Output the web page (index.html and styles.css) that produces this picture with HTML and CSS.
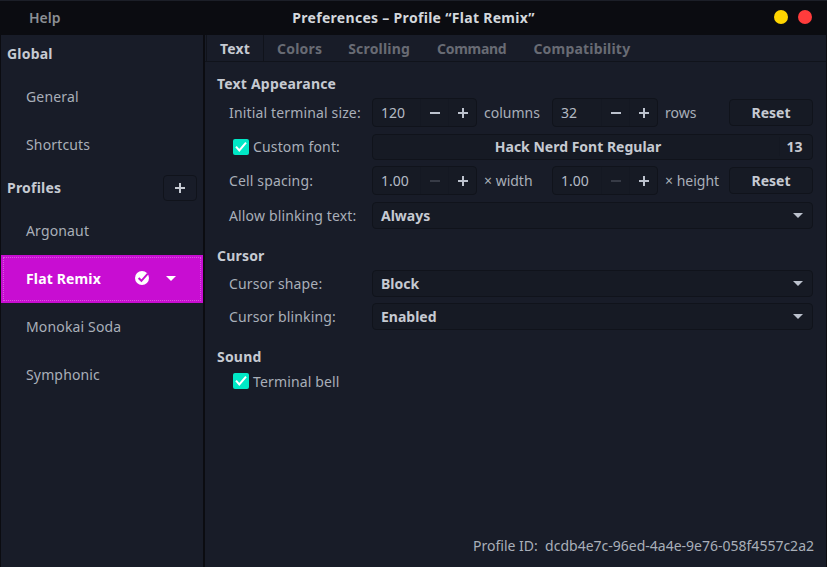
FILE: index.html
```html
<!DOCTYPE html>
<html lang="en">
<head>
    <meta charset="UTF-8">
    <title>Preferences – Profile “Flat Remix”</title>
    <link rel="stylesheet" href="styles.css">
</head>
<body>

<div class="window">
    <header class="titlebar">
        <span class="menu">Help</span>
        <span class="title">Preferences – Profile “Flat Remix”</span>
        <span class="dots">
            <i class="dot dot-min"></i>
            <i class="dot dot-close"></i>
        </span>
    </header>

    <div class="content">
        <aside class="sidebar">
            <div class="side-head">Global</div>
            <div class="side-item">General</div>
            <div class="side-item">Shortcuts</div>
            <div class="side-head side-head-btn">
                Profiles
                <span class="add-btn"><svg class="ico" viewBox="0 0 12 12"><path d="M5 1h2v4h4v2H7v4H5V7H1V5h4z"/></svg></span>
            </div>
            <div class="side-item profile-item">Argonaut</div>
            <div class="side-item profile-item active">
                <span class="active-name">Flat Remix</span>
                <svg class="badge" viewBox="0 0 14 14"><circle cx="7" cy="7" r="7"/><path class="badge-tick" d="M3.6 7l2.8 2.8 6.4-7.2"/></svg>
                <i class="arrow arrow-white"></i>
            </div>
            <div class="side-item profile-item">Monokai Soda</div>
            <div class="side-item profile-item">Symphonic</div>
        </aside>

        <main class="main">
            <nav class="tabs">
                <span class="tab current">Text</span>
                <span class="tab">Colors</span>
                <span class="tab">Scrolling</span>
                <span class="tab tab-tight">Command</span>
                <span class="tab">Compatibility</span>
            </nav>

            <section class="panel">
                <h2 class="heading">Text Appearance</h2>

                <div class="row row-size">
                    <label class="lbl">Initial terminal size:</label>
                    <div class="spin">
                        <span class="spin-val">120</span>
                        <span class="spin-btn"><svg class="ico" viewBox="0 0 12 12"><path d="M1 5h10v2H1z"/></svg></span>
                        <span class="spin-btn"><svg class="ico" viewBox="0 0 12 12"><path d="M5 1h2v4h4v2H7v4H5V7H1V5h4z"/></svg></span>
                    </div>
                    <span class="unit">columns</span>
                    <div class="spin">
                        <span class="spin-val">32</span>
                        <span class="spin-btn"><svg class="ico" viewBox="0 0 12 12"><path d="M1 5h10v2H1z"/></svg></span>
                        <span class="spin-btn"><svg class="ico" viewBox="0 0 12 12"><path d="M5 1h2v4h4v2H7v4H5V7H1V5h4z"/></svg></span>
                    </div>
                    <span class="unit unit-last">rows</span>
                    <button class="reset">Reset</button>
                </div>

                <div class="row row-font">
                    <label class="lbl lbl-check">
                        <span class="check"><svg viewBox="0 0 16 16"><path d="M3 7.7l3.3 3.7 6.7-7.7"/></svg></span>
                        Custom font:
                    </label>
                    <div class="font-btn">
                        <span class="font-name">Hack Nerd Font Regular</span>
                        <span class="font-size">13</span>
                    </div>
                </div>

                <div class="row row-size">
                    <label class="lbl">Cell spacing:</label>
                    <div class="spin">
                        <span class="spin-val">1.00</span>
                        <span class="spin-btn off"><svg class="ico" viewBox="0 0 12 12"><path d="M1 5h10v2H1z"/></svg></span>
                        <span class="spin-btn"><svg class="ico" viewBox="0 0 12 12"><path d="M5 1h2v4h4v2H7v4H5V7H1V5h4z"/></svg></span>
                    </div>
                    <span class="unit">× width</span>
                    <div class="spin">
                        <span class="spin-val">1.00</span>
                        <span class="spin-btn off"><svg class="ico" viewBox="0 0 12 12"><path d="M1 5h10v2H1z"/></svg></span>
                        <span class="spin-btn"><svg class="ico" viewBox="0 0 12 12"><path d="M5 1h2v4h4v2H7v4H5V7H1V5h4z"/></svg></span>
                    </div>
                    <span class="unit unit-last">× height</span>
                    <button class="reset">Reset</button>
                </div>

                <div class="row row-select">
                    <label class="lbl">Allow blinking text:</label>
                    <div class="select">Always<i class="arrow"></i></div>
                </div>

                <h2 class="heading heading-cursor">Cursor</h2>
                <div class="row row-select">
                    <label class="lbl">Cursor shape:</label>
                    <div class="select">Block<i class="arrow"></i></div>
                </div>
                <div class="row row-select">
                    <label class="lbl">Cursor blinking:</label>
                    <div class="select">Enabled<i class="arrow"></i></div>
                </div>

                <h2 class="heading heading-sound">Sound</h2>
                <label class="lbl lbl-check lbl-bell">
                    <span class="check"><svg viewBox="0 0 16 16"><path d="M3 7.7l3.3 3.7 6.7-7.7"/></svg></span>
                    Terminal bell
                </label>
            </section>

            <footer class="profile-id">Profile ID:&nbsp; dcdb4e7c-96ed-4a4e-9e76-058f4557c2a2</footer>
        </main>
    </div>
</div>

</body>
</html>
```

FILE: styles.css
```css
html, body {
    height: 100%;
}
body {
    margin: 0;
    background-color: #0b0c11;
    font-family: "Noto Sans", "Open Sans", sans-serif;
    font-size: 14px;
    color: #bcc2cd;
}
.window {
    display: flex;
    flex-direction: column;
    height: 567px;
    overflow: hidden;
}

/* title bar */
.titlebar {
    display: flex;
    align-items: center;
    position: relative;
    flex: 0 0 35px;
    padding-bottom: 2px;
    background-color: #0b0c11;
    border-top: 1px solid #1c1f28;
    box-sizing: border-box;
}
.menu {
    margin-left: 29px;
    font-weight: 600;
    color: #8b8f94;
}
.title {
    position: absolute;
    left: 0;
    right: 0;
    text-align: center;
    font-weight: 700;
    letter-spacing: 0.3px;
    color: #d3d7dc;
}
.dots {
    display: flex;
    gap: 10px;
    margin-left: auto;
    margin-right: 15px;
}
.dot {
    width: 14px;
    height: 14px;
    border-radius: 50%;
}
.dot-min {
    background-color: #ffd500;
}
.dot-close {
    background-color: #ff3c3c;
}

.content {
    display: flex;
    flex: 1;
    min-height: 0;
}

/* sidebar */
.sidebar {
    width: 202px;
    margin-left: 1px;
    background-color: #181c28;
}
.side-head {
    display: flex;
    align-items: center;
    height: 37px;
    padding-left: 6px;
    font-weight: 700;
    letter-spacing: 0.2px;
    color: #c6cad2;
}
.side-head-btn {
    height: 39px;
    justify-content: space-between;
    padding-right: 6px;
}
.side-item {
    display: flex;
    align-items: center;
    height: 48px;
    padding-left: 25px;
    box-sizing: border-box;
    letter-spacing: 0.15px;
    color: #a9afb9;
}
.profile-item {
    padding-bottom: 2px;
}
.add-btn {
    display: flex;
    align-items: center;
    justify-content: center;
    width: 34px;
    height: 26px;
    box-sizing: border-box;
    border: 1px solid #10131b;
    border-radius: 4px;
    color: #c6cad2;
}
.ico {
    width: 12px;
    height: 12px;
    fill: currentColor;
}
.side-item.active {
    background-color: #c80dd2;
    color: #fff;
    font-weight: 700;
    outline: 1px dotted rgba(255, 255, 255, 0.3);
    outline-offset: -3px;
    padding-right: 27px;
}
.active-name {
    flex: 1;
}
.badge {
    width: 14px;
    height: 14px;
    fill: #fff;
    margin-right: 17px;
}
.badge-tick {
    fill: none;
    stroke: #c80dd2;
    stroke-width: 2;
}
.arrow {
    display: inline-block;
    width: 0;
    height: 0;
    border-left: 5px solid transparent;
    border-right: 5px solid transparent;
    border-top: 5px solid #bcc2cd;
}
.arrow-white {
    border-top-color: #fff;
}

/* main area */
.main {
    display: flex;
    flex-direction: column;
    flex: 1;
    min-width: 0;
    margin-left: 2px;
    margin-right: 1px;
    background-color: #181c28;
}
.tabs {
    display: flex;
    height: 27px;
    padding-left: 1px;
    box-sizing: border-box;
    border-bottom: 1px solid #10131b;
}
.tab {
    display: flex;
    align-items: center;
    padding: 0 13px;
    font-weight: 700;
    letter-spacing: 0.2px;
    color: #686b74;
}
.tab-tight {
    padding: 0 14px;
    letter-spacing: -0.3px;
}
.tab.current {
    justify-content: center;
    width: 58px;
    height: 27px;
    padding: 0;
    box-sizing: border-box;
    border-left: 1px solid #10131b;
    border-right: 1px solid #10131b;
    color: #c6cad2;
}
.panel {
    flex: 1;
    padding: 0 13px 0 12px;
}
.heading {
    margin: 0;
    font-size: 14px;
    line-height: 20px;
    font-weight: 700;
    letter-spacing: 0.2px;
    color: #c6cad2;
}
.panel > .heading:first-child {
    margin-top: 12px;
    margin-bottom: 4px;
}
.heading-cursor {
    margin-top: 17px;
    margin-bottom: 4px;
}
.heading-sound {
    margin-top: 17px;
    margin-bottom: 4px;
}
.row {
    display: flex;
    align-items: center;
}
.row-size {
    height: 29px;
}
.row-font {
    height: 26px;
    margin: 7px 0 6px;
}
.row-font .lbl {
    padding-bottom: 2px;
}
.row-font .check {
    margin-top: 2px;
}
.row-select {
    height: 27px;
    margin-bottom: 6px;
}
.row-size + .row-select {
    margin-top: 7px;
}
.row-select:has(+ .heading) {
    margin-bottom: 0;
}
.lbl {
    flex: 0 0 155px;
    padding-left: 12px;
    box-sizing: border-box;
    letter-spacing: 0.15px;
    color: #a9afb9;
}
.lbl-check {
    display: flex;
    align-items: center;
    gap: 4px;
    padding-left: 16px;
}
.lbl-bell {
    height: 20px;
}
.check {
    display: flex;
    flex: 0 0 16px;
    height: 16px;
    border-radius: 2px;
    background-color: #00e8c6;
}
.check svg {
    width: 16px;
    height: 16px;
    fill: none;
    stroke: #fff;
    stroke-width: 2;
}

/* spin buttons */
.spin {
    display: flex;
    flex: 0 0 105px;
    height: 29px;
    box-sizing: border-box;
    border: 1px solid #10131b;
    border-radius: 4px;
    background-color: #161a24;
}
.unit + .spin {
    flex-basis: 106px;
}
.spin-val {
    flex: 1;
    padding-left: 8px;
    line-height: 27px;
    color: #b4bac5;
}
.spin-btn {
    display: flex;
    align-items: center;
    justify-content: center;
    flex: 0 0 28px;
    border-left: 1px solid #141822;
    box-sizing: border-box;
    color: #bcc2cd;
}
.spin-btn.off {
    color: #373b46;
}
.unit {
    flex: 0 0 75px;
    padding-left: 7px;
    box-sizing: border-box;
    color: #a9afb9;
}
.unit-last {
    flex-basis: 71px;
}
.reset {
    flex: 0 0 84px;
    height: 27px;
    border: 1px solid #10131b;
    border-radius: 4px;
    background-color: #161a24;
    font-family: inherit;
    font-size: 14px;
    font-weight: 700;
    color: #c6cad2;
}
.font-btn {
    display: flex;
    flex: 1;
    align-items: center;
    height: 26px;
    padding-bottom: 2px;
    box-sizing: border-box;
    border: 1px solid #10131b;
    border-radius: 4px;
    background-color: #161a24;
    font-weight: 700;
    color: #c6cad2;
}
.font-name {
    flex: 1;
    padding-left: 4px;
    text-align: center;
}
.font-size {
    width: 29px;
    padding-right: 3px;
    text-align: center;
    border-left: 1px solid #141822;
}
.select {
    display: flex;
    flex: 1;
    align-items: center;
    justify-content: space-between;
    height: 27px;
    padding: 0 9px 0 8px;
    box-sizing: border-box;
    border: 1px solid #10131b;
    border-radius: 4px;
    background-color: #161a24;
    font-weight: 700;
    color: #c6cad2;
}
.profile-id {
    height: 31px;
    padding-right: 12px;
    line-height: 20px;
    text-align: right;
    color: #a9afb9;
}
```
